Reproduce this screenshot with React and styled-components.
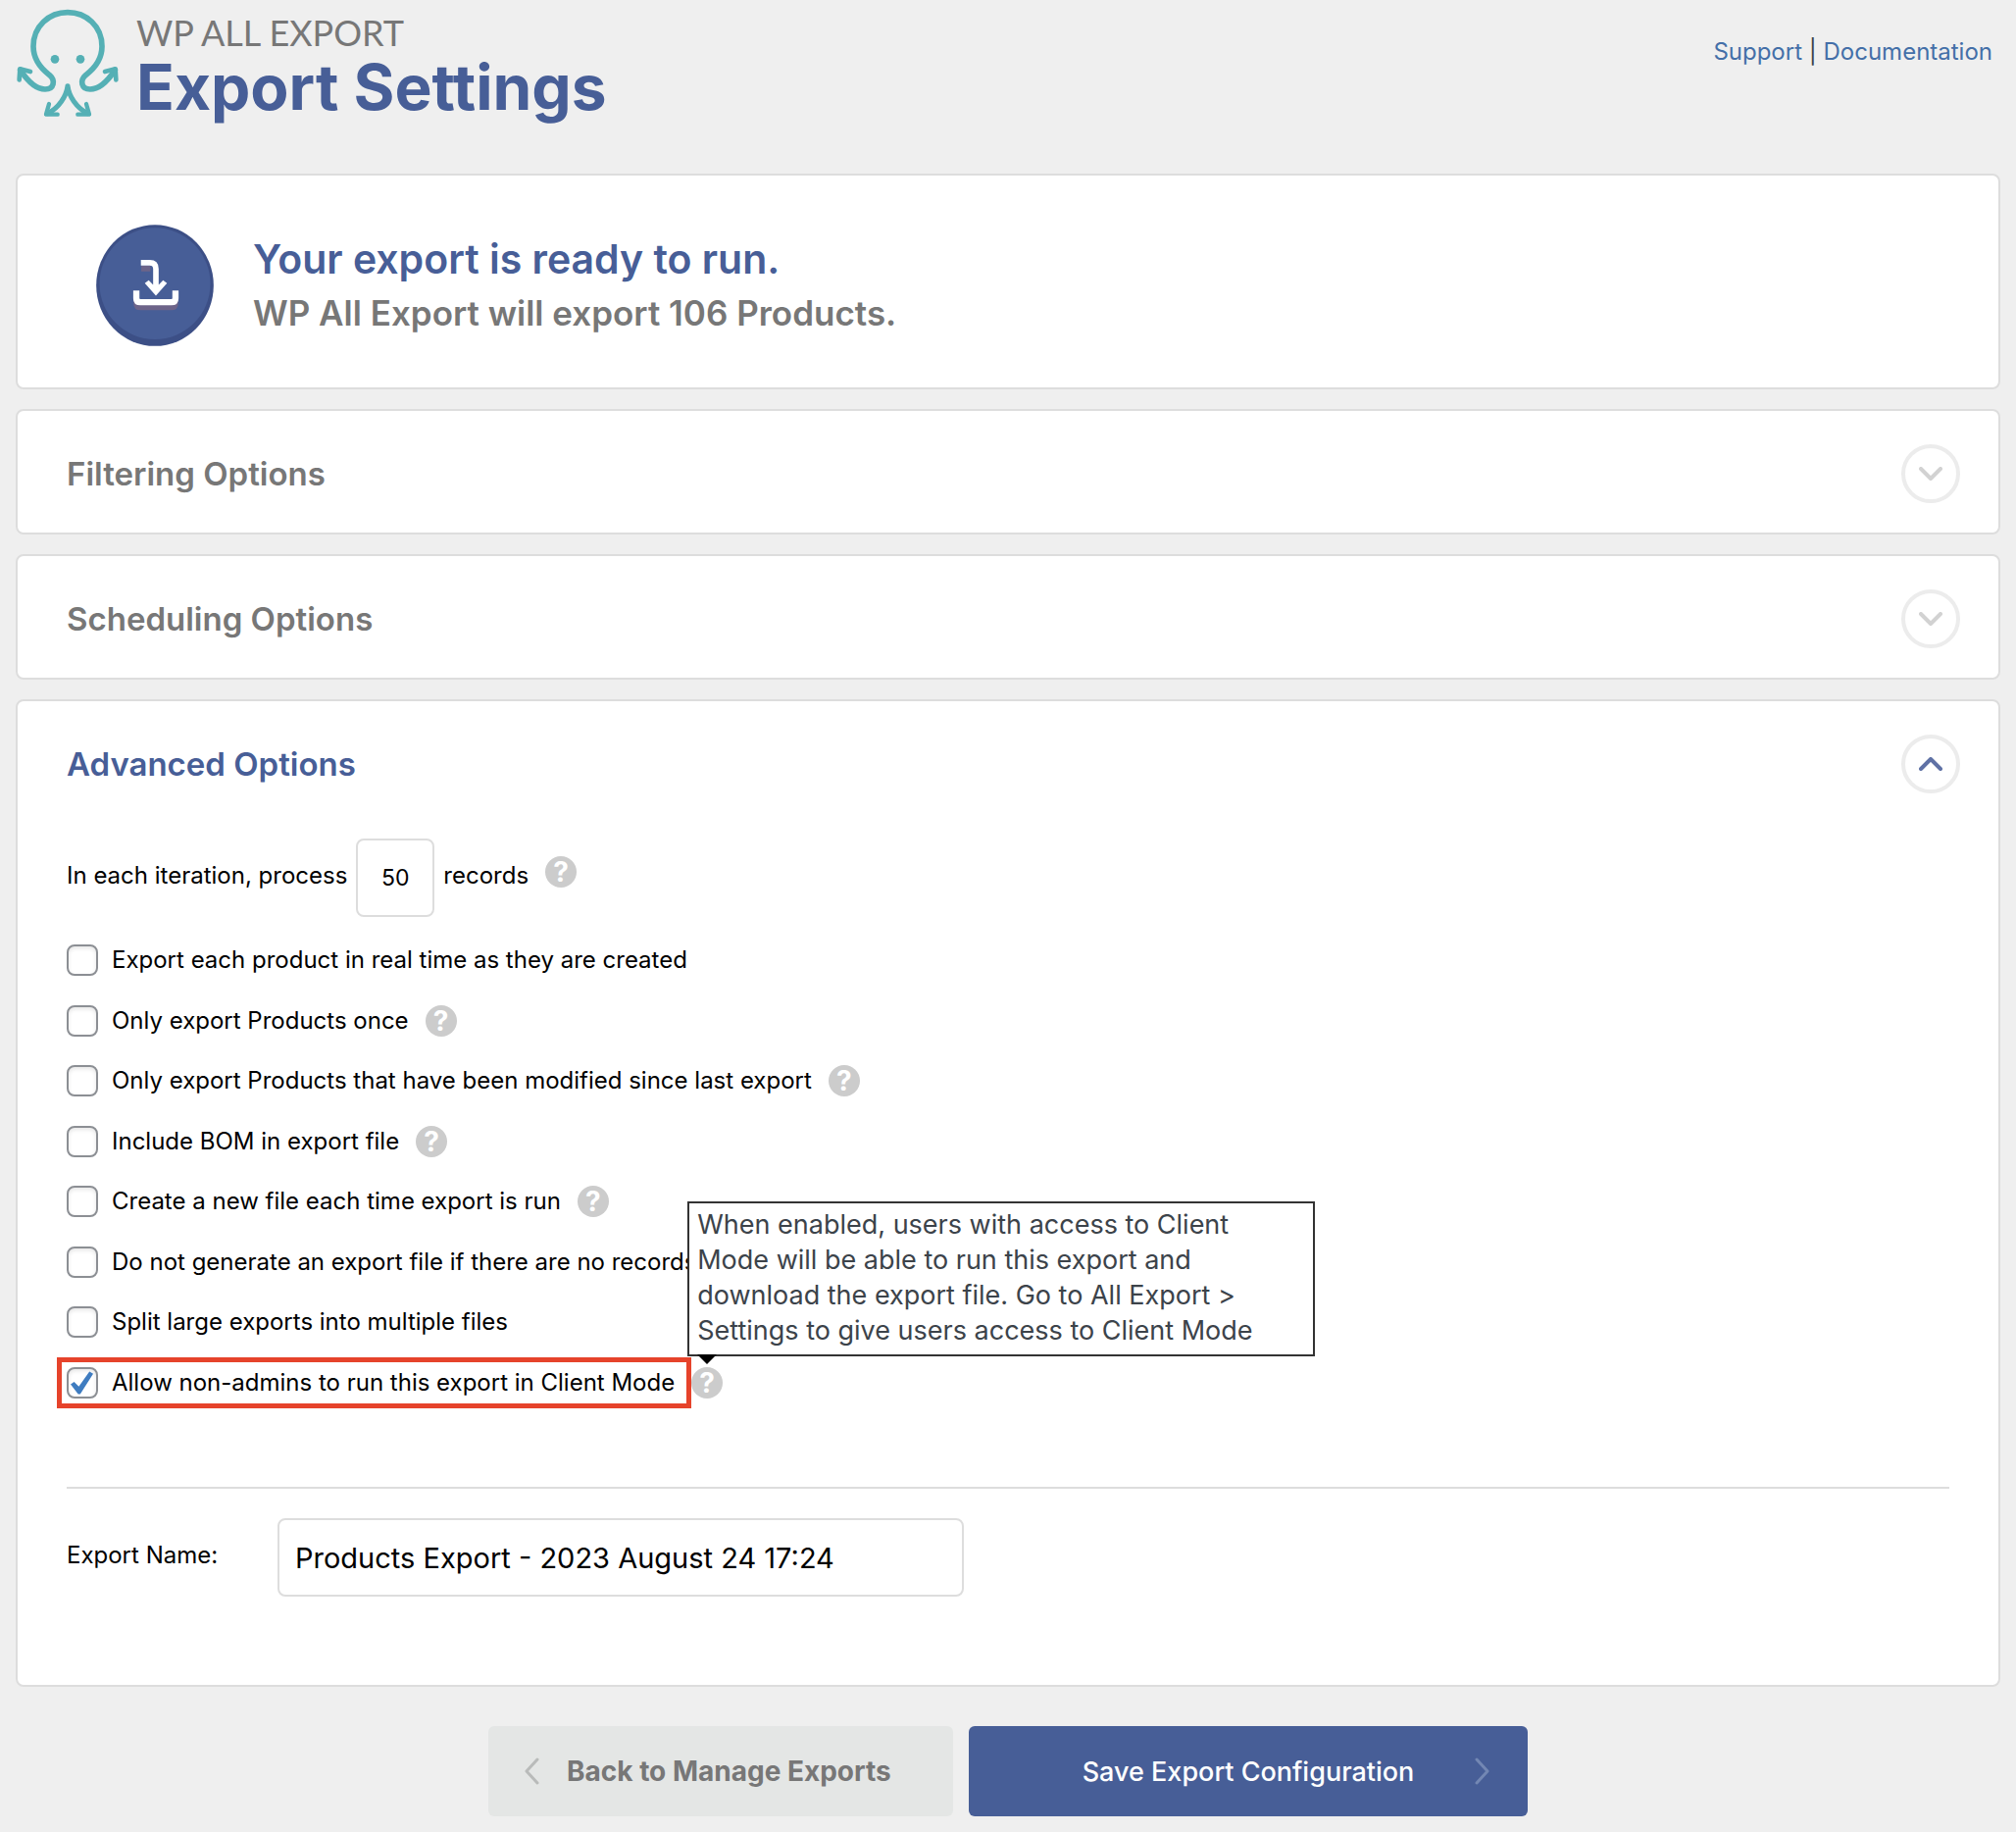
import React, { useState } from "react";
import styled, { createGlobalStyle } from "styled-components";

const GlobalStyle = createGlobalStyle`
    * {
        box-sizing: border-box;
    }

    body {
        margin: 0;
        background: #efefef;
        color: #000;
        font-family: Inter, "Liberation Sans", sans-serif;
        font-size: 24px;
    }
`

const OPTIONS = [
    { id: "realtime", text: "Export each product in real time as they are created" },
    { id: "once", text: "Only export Products once", help: true },
    { id: "modified", text: "Only export Products that have been modified since last export", help: true },
    { id: "bom", text: "Include BOM in export file", help: true },
    { id: "newfile", text: "Create a new file each time export is run", help: true },
    { id: "norecords", text: "Do not generate an export file if there are no records", help: true },
    { id: "split", text: "Split large exports into multiple files" },
    { id: "client", text: "Allow non-admins to run this export in Client Mode", help: true, marked: true, tip: true },
];

const Logo = () => (
    <svg width="106" height="111" viewBox="48 27 318 333" fill="none" stroke="#55b0b5" strokeWidth="17" strokeLinecap="round" strokeLinejoin="round" aria-hidden="true">
        <path d="M62 214C82 244 106 273 138 273C166 273 170 246 152 230C128 212 102 184 102 142C102 80 150 38 207 38S312 80 312 142C312 184 286 212 262 230C244 246 248 273 276 273C308 273 332 244 352 214" />
        <path d="M59 244L61 211L93 219M355 244L353 211L321 219" strokeWidth="14" />
        <path d="M207 263C203 295 180 330 146 347M207 263C211 295 234 330 268 347" strokeWidth="15" />
        <path d="M150 318L141 350H176M264 318L273 350H238" strokeWidth="13" />
        <circle cx="168" cy="181" r="13" fill="#55b0b5" stroke="none" />
        <circle cx="246" cy="181" r="13" fill="#55b0b5" stroke="none" />
    </svg>
)

const DownloadBadge = () => (
    <svg width="120" height="124" viewBox="294 686 360 373" fill="none" aria-hidden="true">
        <ellipse cx="474" cy="872.5" rx="180" ry="186" fill="#3c4f86" />
        <ellipse cx="474" cy="867" rx="170" ry="171" fill="#475e97" />
        <path d="M417 904V928Q417 940 430 940H524Q537 940 537 928V904M432 821H460" stroke="#6d6489" strokeWidth="17" />
        <path d="M417 888V912Q417 924 430 924H524Q537 924 537 912V888" stroke="#fff" strokeWidth="19" />
        <path d="M431 803H458Q477 803 477 822V884" stroke="#fff" strokeWidth="17" />
        <path d="M443 866L455 857L468 870H486L499 857L511 866L477 904Z" fill="#fff" />
    </svg>
)

const Chevron = ({ d, color, width, height, stroke }) => (
    <svg width={width} height={height} viewBox={`0 0 ${width} ${height}`} fill="none" stroke={color} strokeWidth={stroke} strokeLinecap="round" strokeLinejoin="round" aria-hidden="true">
        <path d={d} />
    </svg>
)

const Section = ({ title, open, onToggle, children }) => (
    <Card>
        <SectionHead>
            <SectionTitle $open={open}>{title}</SectionTitle>
            <Toggle type="button" aria-expanded={open} aria-label={title} onClick={onToggle}>
                {open ? (
                    <Chevron d="M2 12L12 2L22 12" color="#5f71a5" width={24} height={14} stroke={4} />
                ) : (
                    <Chevron d="M2 2L12 12L22 2" color="#d2d2d2" width={24} height={14} stroke={4} />
                )}
            </Toggle>
        </SectionHead>
        {open ? children : null}
    </Card>
)

const App = () => {
    const [opened, setOpened] = useState({ filtering: false, scheduling: false, advanced: true });
    const [checked, setChecked] = useState({ client: true });
    const [records, setRecords] = useState("50");
    const [name, setName] = useState("Products Export - 2023 August 24 17:24");

    const toggle = (key) => setOpened({ ...opened, [key]: !opened[key] });

    return (
        <Page>
            <GlobalStyle />
            <Header>
                <Logo />
                <Titles>
                    <Product>WP ALL EXPORT</Product>
                    <Title>Export Settings</Title>
                </Titles>
                <Links>
                    <a href="#support">Support</a> | <a href="#documentation">Documentation</a>
                </Links>
            </Header>

            <main>
                <Sections>
                    <Card>
                        <Ready>
                            <DownloadBadge />
                            <div>
                                <ReadyTitle>Your export is ready to run.</ReadyTitle>
                                <ReadyText>WP All Export will export 106 Products.</ReadyText>
                            </div>
                        </Ready>
                    </Card>

                    <Section title="Filtering Options" open={opened.filtering} onToggle={() => toggle("filtering")} />
                    <Section title="Scheduling Options" open={opened.scheduling} onToggle={() => toggle("scheduling")} />
                    <Section title="Advanced Options" open={opened.advanced} onToggle={() => toggle("advanced")}>
                        <Advanced>
                            <Iteration>
                                <FieldLabel htmlFor="records">In each iteration, process</FieldLabel>
                                <CountInput id="records" value={records} onChange={(e) => setRecords(e.target.value)} />
                                <FieldLabel htmlFor="records">records</FieldLabel>
                                <HelpSlot $raised>
                                    <Help type="button" aria-label="Help">?</Help>
                                </HelpSlot>
                            </Iteration>

                            <Options>
                                {OPTIONS.map((option) => (
                                    <Option key={option.id}>
                                        <OptionLabel $marked={option.marked}>
                                            <Checkbox
                                                type="checkbox"
                                                checked={!!checked[option.id]}
                                                onChange={(e) => setChecked({ ...checked, [option.id]: e.target.checked })}
                                            />
                                            {option.text}
                                        </OptionLabel>
                                        {option.help ? (
                                            <HelpSlot>
                                                <Help type="button" aria-label="Help">?</Help>
                                                {option.tip ? (
                                                    <Tooltip role="tooltip">
                                                        When enabled, users with access to Client<br />
                                                        Mode will be able to run this export and<br />
                                                        download the export file. Go to All Export &gt;<br />
                                                        Settings to give users access to Client Mode
                                                    </Tooltip>
                                                ) : null}
                                            </HelpSlot>
                                        ) : null}
                                    </Option>
                                ))}
                            </Options>

                            <NameRow>
                                <FieldLabel htmlFor="export-name">Export Name:</FieldLabel>
                                <NameInput id="export-name" value={name} onChange={(e) => setName(e.target.value)} />
                            </NameRow>
                        </Advanced>
                    </Section>
                </Sections>

                <Actions>
                    <BackButton type="button">
                        <Chevron d="M14 2L3 14L14 26" color="#b9bbba" width={16} height={28} stroke={3} />
                        Back to Manage Exports
                    </BackButton>
                    <SaveButton type="button">
                        <span>Save Export Configuration</span>
                        <Chevron d="M2 2L13 14L2 26" color="#7387b3" width={16} height={28} stroke={3} />
                    </SaveButton>
                </Actions>
            </main>
        </Page>
    )
}

const Page = styled.div`
    padding: 0 16px 16px;
`

const Header = styled.header`
    display: flex;
    align-items: flex-start;
    min-height: 177px;
    padding-top: 9px;
`

const Titles = styled.div`
    flex: 1;
    padding-left: 17px;
`

const Product = styled.div`
    color: #777;
    font-family: Lato, "Liberation Sans", sans-serif;
    font-size: 36px;
    line-height: 48px;
`

const Title = styled.h1`
    margin: 0;
    color: #475e97;
    font-size: 64px;
    font-weight: 700;
    line-height: 64px;
`

const Links = styled.nav`
    padding: 28px 8px 0 0;
    color: #3c434a;
    line-height: 32px;

    a {
        color: #446fa8;
        text-decoration: none;
    }
`

const Sections = styled.div`
    display: flex;
    flex-direction: column;
    gap: 20px;
`

const Card = styled.section`
    background: #fff;
    border: 2px solid #ddd;
    border-radius: 8px;
`

const Ready = styled.div`
    display: flex;
    align-items: center;
    gap: 40px;
    padding: 50px 80px 42px;
`

const ReadyTitle = styled.h2`
    margin: 0;
    color: #475e97;
    font-size: 41px;
    font-weight: 600;
    line-height: 56px;
`

const ReadyText = styled.p`
    margin: 0;
    color: #777;
    font-size: 35px;
    font-weight: 600;
    line-height: 54px;
`

const SectionHead = styled.div`
    display: flex;
    align-items: center;
    justify-content: space-between;
    padding: 34px 39px 30px 50px;
`

const SectionTitle = styled.h3`
    margin: 0;
    color: ${(props) => (props.$open ? "#475e97" : "#777")};
    font-size: 33px;
    font-weight: 600;
    line-height: 60px;
`

const Toggle = styled.button`
    display: flex;
    align-items: center;
    justify-content: center;
    width: 60px;
    height: 60px;
    padding: 0;
    background: #fff;
    border: 4px solid #ececec;
    border-radius: 50%;
    cursor: pointer;
`

const Advanced = styled.div`
    padding: 16px 50px 90px;
`

const Iteration = styled.div`
    display: flex;
    align-items: center;
    gap: 9px;
`

const FieldLabel = styled.label`
    padding-bottom: 5px;
    line-height: 32px;
`

const TextInput = styled.input`
    height: 80px;
    background: #fff;
    border: 2px solid #ddd;
    border-radius: 8px;
    color: #000;
    font-family: inherit;
    outline: none;
`

const CountInput = styled(TextInput)`
    width: 80px;
    padding: 0;
    font-size: 23px;
    text-align: center;
`

const NameInput = styled(TextInput)`
    width: 700px;
    padding: 0 16px;
    font-size: 29px;
`

const Options = styled.div`
    display: flex;
    flex-direction: column;
    justify-content: space-between;
    min-height: 463px;
    margin-top: 28px;
`

const Option = styled.div`
    display: flex;
    align-items: center;
`

const OptionLabel = styled.label`
    position: relative;
    display: flex;
    align-items: center;
    gap: 14px;
    line-height: 32px;

    &::after {
        content: "";
        display: ${(props) => (props.$marked ? "block" : "none")};
        position: absolute;
        inset: -10px -17px -10px -10px;
        border: 5px solid #e6432b;
        pointer-events: none;
    }
`

const Checkbox = styled.input`
    appearance: none;
    display: grid;
    place-items: center;
    width: 32px;
    height: 32px;
    margin: 0;
    background: #fff;
    border: 2px solid #8c8f94;
    border-radius: 8px;
    box-shadow: inset 0 2px 4px rgba(0, 0, 0, 0.1);

    &:checked::before {
        content: "";
        width: 24px;
        height: 24px;
        background: #3f7cc0;
        clip-path: polygon(0 56%, 15% 46%, 35% 66%, 80% 2%, 96% 12%, 41% 98%, 32% 98%);
    }
`

const HelpSlot = styled.span`
    position: relative;
    display: flex;
    margin-left: ${(props) => (props.$raised ? "8px" : "17px")};
    padding-bottom: ${(props) => (props.$raised ? "12px" : "0")};
`

const Help = styled.button`
    width: 32px;
    height: 32px;
    padding: 0;
    background: #ccc;
    border: 0;
    border-radius: 50%;
    color: #fff;
    font-family: inherit;
    font-size: 28px;
    font-weight: 700;
    line-height: 32px;
    text-align: center;
    cursor: help;
`

const Tooltip = styled.div`
    position: absolute;
    bottom: 43px;
    left: -4px;
    z-index: 1;
    width: 640px;
    padding: 4px 8px 6px;
    background: #fff;
    border: 2px solid #333;
    color: #3c434a;
    font-size: 27px;
    line-height: 36px;
    white-space: nowrap;

    &::after {
        content: "";
        position: absolute;
        top: 100%;
        left: 8px;
        border: 10px solid transparent;
        border-top-color: #000;
        border-bottom: 0;
    }
`

const NameRow = styled.div`
    display: grid;
    grid-template-columns: 215px auto;
    align-items: center;
    justify-content: start;
    margin-top: 90px;
    padding-top: 30px;
    border-top: 2px solid #ddd;
`

const Actions = styled.div`
    display: flex;
    justify-content: center;
    gap: 16px;
    padding-top: 40px;
`

const Button = styled.button`
    height: 92px;
    border: 0;
    border-radius: 6px;
    font-family: inherit;
    cursor: pointer;
`

const BackButton = styled(Button)`
    display: flex;
    align-items: center;
    gap: 28px;
    width: 474px;
    padding: 0 36px;
    background: #e4e6e5;
    color: #777;
    font-size: 28px;
    font-weight: 700;
`

const SaveButton = styled(Button)`
    display: grid;
    grid-template-columns: 1fr auto 1fr;
    align-items: center;
    width: 570px;
    padding: 0 38px;
    background: #475e97;
    color: #fff;
    font-size: 27px;
    font-weight: 500;

    span {
        grid-column: 2;
    }

    svg {
        justify-self: end;
    }
`

export default App;
